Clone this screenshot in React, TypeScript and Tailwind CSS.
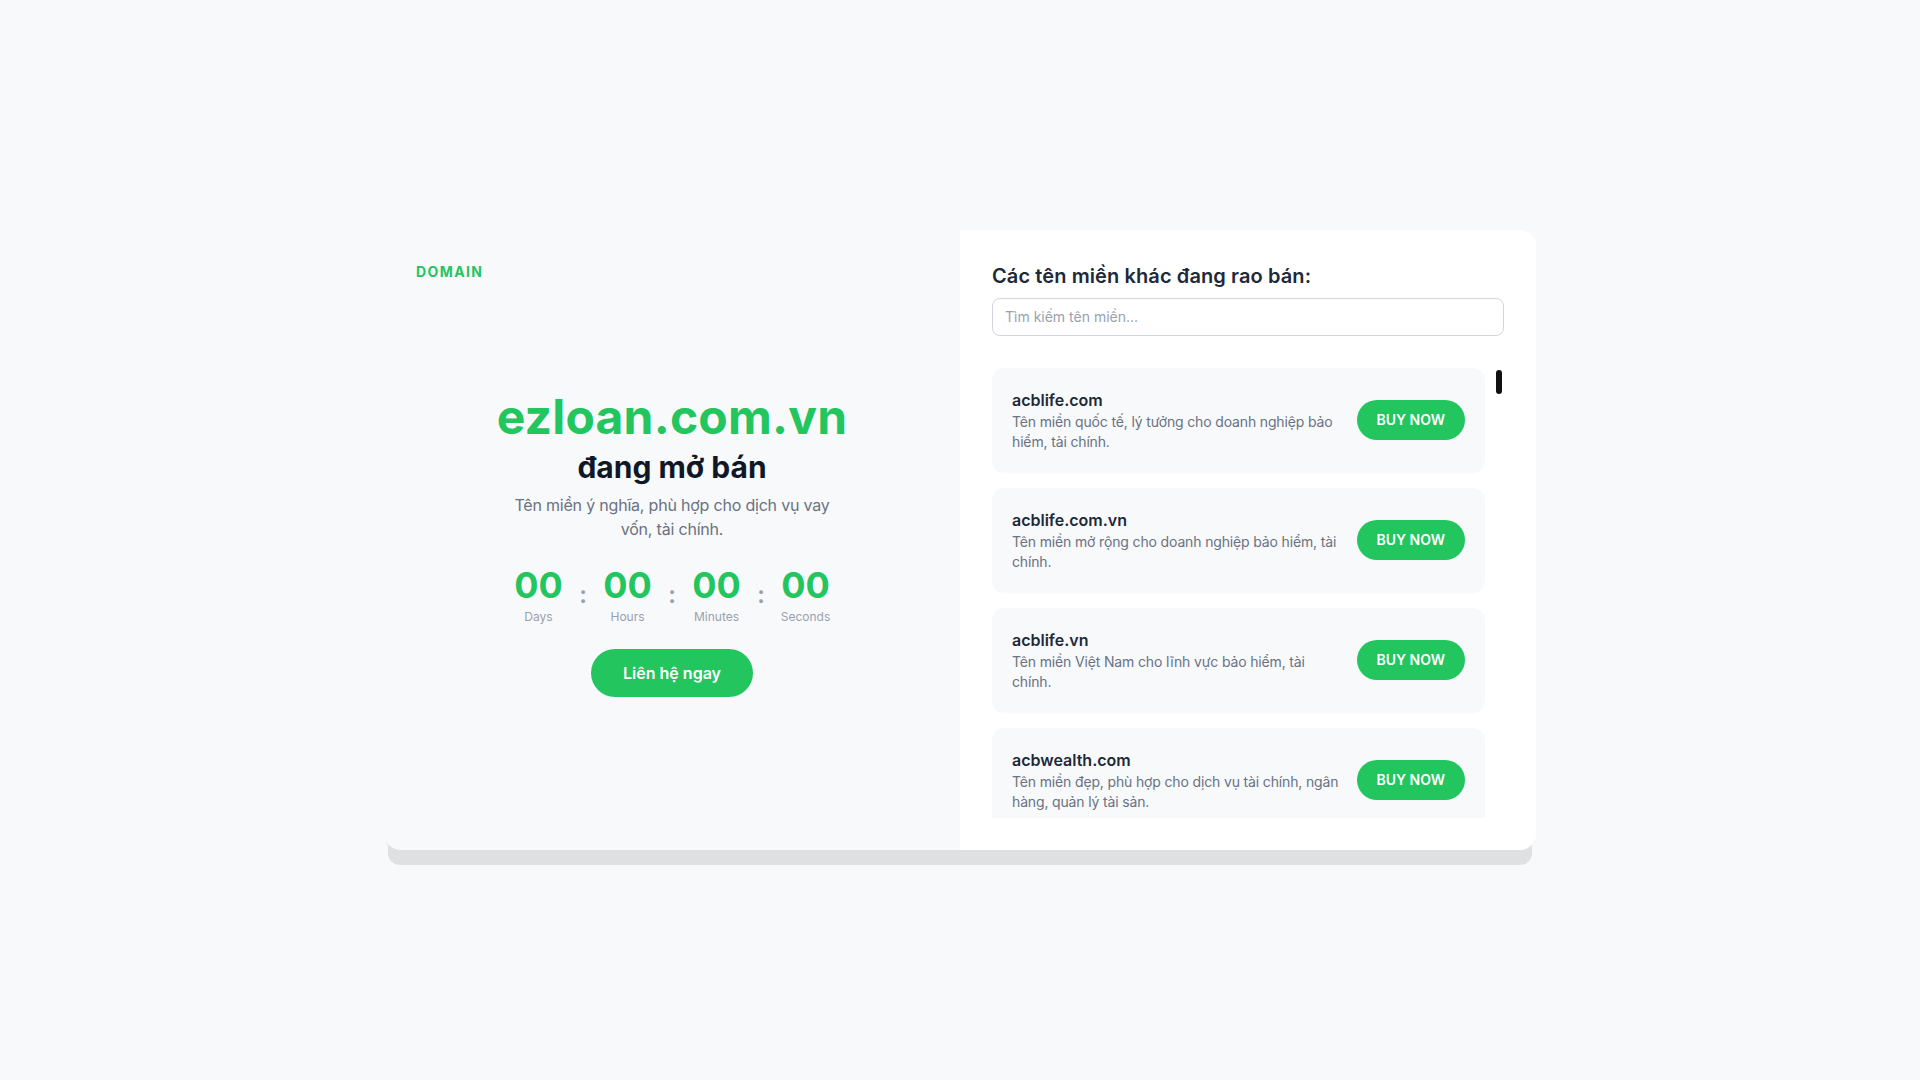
import React from 'react';

const domains = [
  { name: 'acblife.com', desc: 'Tên miền quốc tế, lý tưởng cho doanh nghiệp bảo hiểm, tài chính.' },
  { name: 'acblife.com.vn', desc: 'Tên miền mở rộng cho doanh nghiệp bảo hiểm, tài chính.' },
  { name: 'acblife.vn', desc: 'Tên miền Việt Nam cho lĩnh vực bảo hiểm, tài chính.' },
  { name: 'acbwealth.com', desc: 'Tên miền đẹp, phù hợp cho dịch vụ tài chính, ngân hàng, quản lý tài sản.' },
  { name: 'acbwealth.vn', desc: 'Tên miền Việt Nam cho dịch vụ quản lý tài sản.' },
];

const units = ['Days', 'Hours', 'Minutes', 'Seconds'];

export default function App() {
  return (
    <div
      className="flex min-h-screen items-center justify-center bg-[#f8f9fb]"
      style={{ fontFamily: 'Inter, "Noto Sans", sans-serif' }}
    >
      <div className="flex h-[620px] w-[1152px] rounded-2xl shadow-[0_19px_0_-4px_#dfe0e2,0_2px_0_-1px_#cbccce]">
        {/* Left: hero */}
        <div className="flex w-1/2 flex-col p-8">
          <div className="text-sm font-bold tracking-widest text-[#22c55e]">DOMAIN</div>
          <div className="flex flex-1 flex-col items-center justify-center pb-2.5 text-center">
            <h1 className="text-5xl font-bold leading-[48px] tracking-[0.2px] text-[#22c55e]">ezloan.com.vn</h1>
            <h2 className="mt-2 text-3xl font-bold text-gray-900">đang mở bán</h2>
            <p className="mt-2 max-w-[336px] text-base tracking-[-0.2px] text-gray-500">
              Tên miền ý nghĩa, phù hợp cho dịch vụ vay vốn, tài chính.
            </p>
            <div className="mt-6 flex items-center justify-center">
              {units.map((u, i) => (
                <React.Fragment key={u}>
                  {i > 0 && (
                    <span className="w-[25px] text-center text-2xl font-semibold text-gray-400">:</span>
                  )}
                  <div className="flex w-16 flex-col items-center">
                    <span className="text-4xl font-bold leading-10 text-[#22c55e]">00</span>
                    <span className="mt-1 text-xs text-gray-400">{u}</span>
                  </div>
                </React.Fragment>
              ))}
            </div>
            <button className="mt-6 rounded-full bg-[#22c55e] px-8 py-3 text-base font-semibold text-white">
              Liên hệ ngay
            </button>
          </div>
        </div>

        {/* Right: other domains */}
        <div className="flex w-1/2 flex-col rounded-r-2xl bg-white p-8">
          <h3 className="text-xl font-semibold tracking-[0.1px] text-gray-800">Các tên miền khác đang rao bán:</h3>
          <input
            type="text"
            placeholder="Tìm kiếm tên miền..."
            className="mt-2 w-full rounded-lg border border-gray-300 bg-white px-3 py-2 text-sm text-gray-800 outline-none placeholder:text-gray-400"
          />
          <div className="mt-8 flex min-h-0 flex-1 gap-[11px]">
            <div className="flex-1 space-y-4 overflow-hidden">
              {domains.map((d) => (
                <div
                  key={d.name}
                  className="flex items-center gap-3 rounded-xl bg-[#f8f9fb] p-5 shadow-[0_1px_2px_rgba(0,0,0,0.03)]"
                >
                  <div className="flex-1">
                    <div className="text-base font-semibold text-gray-800">{d.name}</div>
                    <div className="text-sm tracking-[-0.15px] text-gray-500">{d.desc}</div>
                  </div>
                  <button className="shrink-0 rounded-full bg-[#22c55e] px-5 py-2.5 text-sm font-semibold text-white">
                    BUY NOW
                  </button>
                </div>
              ))}
            </div>
            <div className="w-2 pt-0.5">
              <div className="h-6 w-1.5 rounded-full bg-[#111]" />
            </div>
          </div>
        </div>
      </div>
    </div>
  );
}
